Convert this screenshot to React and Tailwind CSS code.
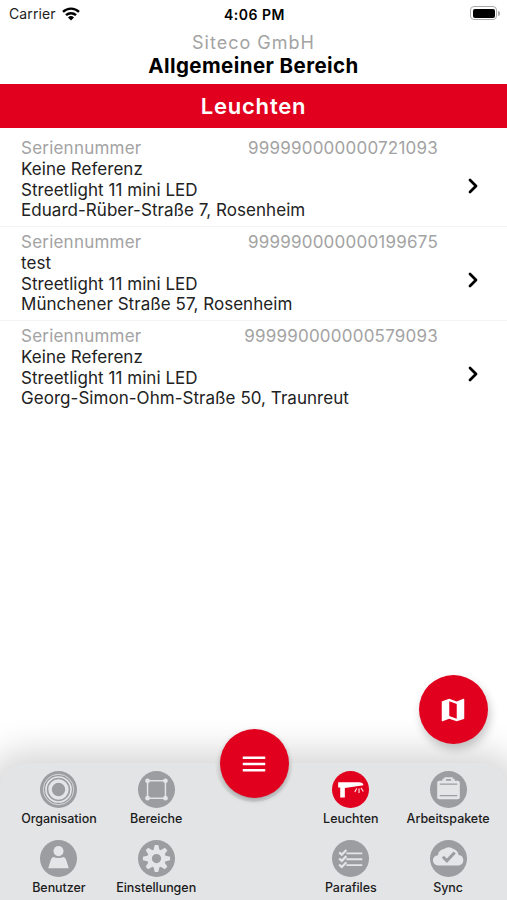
import { FiChevronRight } from "react-icons/fi";
import { MdMap, MdMenu } from "react-icons/md";

const lamps = [
  { serial: "999990000000721093", reference: "Keine Referenz", type: "Streetlight 11 mini LED", address: "Eduard-Rüber-Straße 7, Rosenheim" },
  { serial: "999990000000199675", reference: "test", type: "Streetlight 11 mini LED", address: "Münchener Straße 57, Rosenheim" },
  { serial: "999990000000579093", reference: "Keine Referenz", type: "Streetlight 11 mini LED", address: "Georg-Simon-Ohm-Straße 50, Traunreut" },
];

function OrganisationIcon() {
  return (
    <svg viewBox="0 0 36 36" className="size-full" fill="none" stroke="#e4e5e7">
      <circle cx="18" cy="18" r="14.8" strokeWidth="0.8" />
      <circle cx="18" cy="18" r="12.2" strokeWidth="1.6" />
      <circle cx="18" cy="18" r="8.2" strokeWidth="3.4" />
    </svg>
  );
}

function AreaIcon() {
  return (
    <svg viewBox="0 0 36 36" className="size-full" fill="#e4e5e7">
      <rect x="9.3" y="9.5" width="17.4" height="17" fill="none" stroke="#e4e5e7" strokeWidth="1.4" />
      <circle cx="9.3" cy="9.5" r="2.3" />
      <circle cx="26.7" cy="9.5" r="2.3" />
      <circle cx="9.3" cy="26.5" r="2.3" />
      <circle cx="26.7" cy="26.5" r="2.3" />
    </svg>
  );
}

function LampIcon() {
  return (
    <svg viewBox="0 0 36 36" className="size-full" fill="#fff">
      <path d="M6 11h20c2.800.1 4.600 1.200 4.600 2.800L12.500 16.500v9.200H8V16H6z" />
      <path d="M24 17l-1.800 3.500M26.300 17v4.500M28.200 16.600l2.300 3.400" stroke="#fff" strokeWidth="1" fill="none" />
    </svg>
  );
}

function CaseIcon() {
  return (
    <svg viewBox="0 0 36 36" className="size-full" fill="none" stroke="#e4e5e7">
      <path d="M13 10V8.500h1.800V7h6.400v1.500H23V10" strokeWidth="1.800" />
      <rect x="7" y="9.500" width="22" height="18" rx="2" fill="#e4e5e7" stroke="none" />
      <path d="M9.500 12.800h17M9.500 24h17" stroke="#9c9da0" strokeWidth="1.300" />
    </svg>
  );
}

function UserIcon() {
  return (
    <svg viewBox="0 0 36 36" className="size-full" fill="#e4e5e7">
      <circle cx="18" cy="10.800" r="4.900" />
      <path d="M13 16.500c3 1.500 7 1.500 10 0 1 .3 2 1.500 2.500 3l2.500 8H8l2.500-8c.5-1.500 1.500-2.700 2.500-3z" />
    </svg>
  );
}

function SettingsIcon() {
  return (
    <svg viewBox="0 0 36 36" className="size-full" fill="none" stroke="#e4e5e7">
      <circle cx="18" cy="18" r="6.800" strokeWidth="4.600" />
      {[0, 45, 90, 135, 180, 225, 270, 315].map((angle) => (
        <path key={angle} d="M15 10l1.300-5.200h3.400L21 10z" fill="#e4e5e7" stroke="none" transform={`rotate(${angle} 18 18)`} />
      ))}
    </svg>
  );
}

function ListIcon() {
  return (
    <svg viewBox="0 0 36 36" className="size-full" fill="none" stroke="#e4e5e7" strokeWidth="1.800">
      <path d="M14 13h15.500M14 18.700h15.500M14 24.500h15.500" />
      <path d="M7 12l2.500 2.300 4.500-4.600M7 18l2.500 2.300 4.500-4.600M7 24l2.500 2.300 4.500-4.600" strokeWidth="2.200" />
    </svg>
  );
}

function SyncIcon() {
  return (
    <svg viewBox="0 0 36 36" className="size-full">
      <path d="M8 24.800a5 5 0 0 1-.3-10A7 7 0 0 1 13.500 8.800a8 8 0 0 1 9.500 0 7.500 7.500 0 0 1 4.800 5.700 5.200 5.200 0 0 1 .2 10.300z" fill="#e4e5e7" />
      <path d="M12.500 16.300l3.900 3.900 7.600-8" fill="none" stroke="#9c9da0" strokeWidth="3" />
    </svg>
  );
}

const navItems = [
  { label: "Organisation", Icon: OrganisationIcon },
  { label: "Bereiche", Icon: AreaIcon },
  null,
  { label: "Leuchten", Icon: LampIcon, active: true },
  { label: "Arbeitspakete", Icon: CaseIcon },
  { label: "Benutzer", Icon: UserIcon },
  { label: "Einstellungen", Icon: SettingsIcon },
  null,
  { label: "Parafiles", Icon: ListIcon },
  { label: "Sync", Icon: SyncIcon },
];

function StatusBar() {
  return (
    <div className="grid h-7 grid-cols-3 items-center pl-[9px] pr-[7px] text-[14px] text-[#222]">
      <div className="flex items-center gap-[6px] pb-px">
        <span className="tracking-[0.1px]">Carrier</span>
        <svg viewBox="0 0 18 14" className="h-[14px] w-[18px]" fill="none" stroke="#000" strokeWidth="2.400">
          <path d="M1 4.900a11.500 11.500 0 0 1 16 0" />
          <path d="M4 8.200a7.200 7.200 0 0 1 10 0" />
          <path d="M9 13.500l-3-3.100a4.300 4.300 0 0 1 6 0z" fill="#000" stroke="none" />
        </svg>
      </div>
      <span className="text-center text-[14px] font-semibold tracking-[0.500px] text-black">4:06 PM</span>
      <div className="flex items-center justify-end gap-px pb-[2px]">
        <div className="h-[14px] w-[27px] rounded-[4px] border border-[#aaa] p-[1.500px]">
          <div className="size-full rounded-[2px] bg-black" />
        </div>
        <div className="h-[5px] w-[2px] rounded-r-full bg-[#aaa]" />
      </div>
    </div>
  );
}

function LampRow({ lamp }) {
  return (
    <li className="flex h-[94px] items-center border-b border-[#f3f3f3] pl-[21px] pr-[22px] text-[17px] leading-[20.800px] tracking-[0.040px] text-[#222] last:border-transparent">
      <div className="w-[417px]">
        <div className="flex justify-between tracking-[0.220px] text-[#a3a3a3]">
          <span>Seriennummer</span>
          <span>{lamp.serial}</span>
        </div>
        <p>{lamp.reference}</p>
        <p>{lamp.type}</p>
        <p>{lamp.address}</p>
      </div>
      <FiChevronRight className="ml-auto mt-[13px] size-6 text-black" strokeWidth={2.8} />
    </li>
  );
}

function NavItem({ item }) {
  const { label, Icon, active } = item;
  return (
    <button className="flex flex-col items-center">
      <span className={active ? "flex size-[37px] items-center justify-center rounded-full bg-[#e2001f]" : "flex size-[37px] items-center justify-center rounded-full bg-[#9c9da0]"}>
        <Icon />
      </span>
      <span className="mt-[3px] whitespace-nowrap text-[12.500px] font-medium leading-4 tracking-[-0.040px] text-[#1c1c1c]">{label}</span>
    </button>
  );
}

export default function App() {
  return (
    <div className="relative flex h-[900px] w-[507px] flex-col overflow-hidden bg-white font-['Inter',sans-serif]">
      <StatusBar />
      <header className="flex h-14 flex-col items-center pt-[3px]">
        <p className="text-[18px] leading-[23px] tracking-[1px] text-[#a3a3a3]">Siteco GmbH</p>
        <h1 className="text-[20.500px] font-bold leading-[24px] tracking-[0.420px] text-black">Allgemeiner Bereich</h1>
      </header>
      <div className="flex h-11 items-center justify-center bg-[#e2001f] text-[22px] font-semibold tracking-[0.800px] text-white">Leuchten</div>
      <ul className="pt-[5px]">
        {lamps.map((lamp) => (
          <LampRow key={lamp.serial} lamp={lamp} />
        ))}
      </ul>

      <nav className="relative mt-auto h-[137px] rounded-t-[26px] bg-[#e3e4e6] shadow-[0_4px_34px_16px_rgba(0,0,0,0.160)]">
        {/* recess for the menu button */}
        <div className="absolute left-1/2 top-0 h-[39px] w-[78px] -translate-x-1/2 rounded-b-full bg-linear-to-b from-[#e3e3e3] to-[#d3d4d6]" />
        <div className="grid grid-cols-[97.300px_97.300px_97.300px_97.300px_97.300px] justify-center gap-y-[12.500px] pt-2">
          {navItems.map((item, i) => (item ? <NavItem key={item.label} item={item} /> : <span key={i} />))}
        </div>
      </nav>

      <button className="absolute left-[219.500px] top-[729px] flex size-[69px] items-center justify-center rounded-full bg-[#e2001f] text-white shadow-[0_2px_5px_rgba(0,0,0,0.250)]">
        <MdMenu className="size-[30px]" />
      </button>
      <button className="absolute left-[418.500px] top-[675px] flex size-[69px] items-center justify-center rounded-full bg-[#e2001f] text-white shadow-[2px_5px_10px_rgba(0,0,0,0.220)]">
        <MdMap className="size-[30px]" />
      </button>
    </div>
  );
}
